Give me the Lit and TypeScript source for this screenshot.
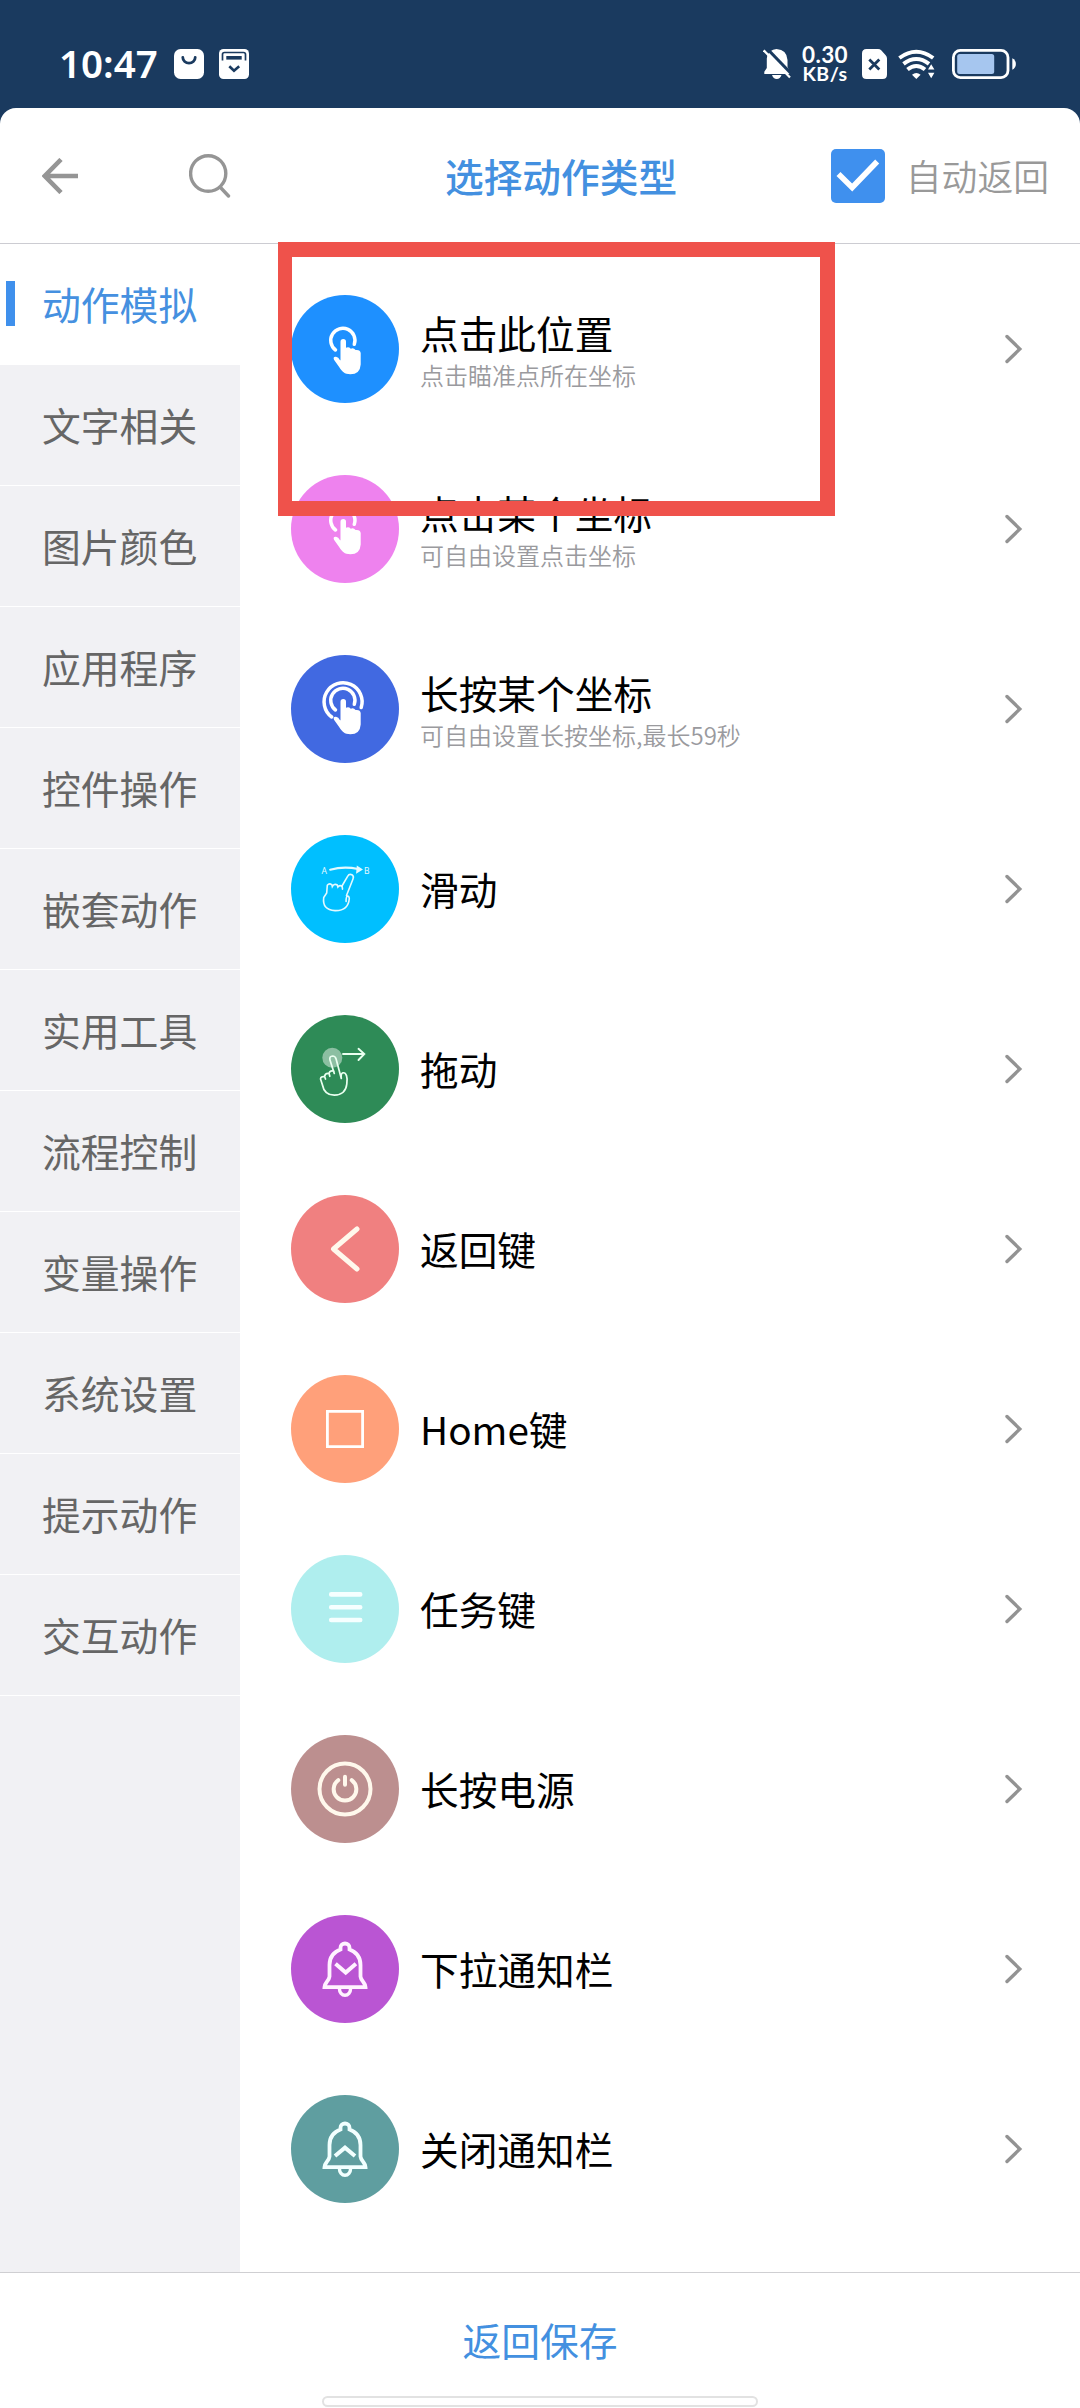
import { LitElement, html, svg, css, type SVGTemplateResult } from "lit";
import { customElement, property } from "lit/decorators.js";
import { classMap } from "lit/directives/class-map.js";

const hand = svg`<path fill="#fff" stroke="none" d="M49.500 65.200V46.700a2.750 2.750 0 0 1 5.500 0V52.800q2.600-1.400 4.800.9 2.800-1.200 4.800 1.300 4.600-.6 5.100 3V69.500q-.6 9.800-10.400 9.800c-5.800 0-8.400-2.800-11-7l-5.300-7.500q-1.300-3.300 2-3 2.500.5 4 3.400z"/>`;
const innerArc = svg`<path d="M44.500 55A12.100 12.100 0 1 1 63.300 49.300"/>`;
const bell = svg`<path stroke-width="3.800" d="M49.500 34.500v-1.800a4.500 4.200 0 0 1 9 0v1.800q11 4 11 15.500v11.500q.3 2.800 2.800 5.500 2 2.500 2.200 5.200h-41q.2-2.700 2.200-5.200 2.500-2.700 2.800-5.500V50q0-11.500 11-15.500z"/><path stroke-width="3.400" d="M48.400 73.500a5.600 6.800 0 0 0 11.200 0"/>`;

const ICONS: Record<string, SVGTemplateResult> = {
  tap: svg`<g stroke-width="3.500">${innerArc}</g>${hand}`,
  press: svg`<g stroke-width="3.500">${innerArc}<path d="M40.700 62A19 19 0 1 1 70.200 52.500"/></g>${hand}`,
  slide: svg`<g stroke="#e3f9ff" stroke-width="1.600"><path stroke-width="2.200" d="M39.200 34.700Q53 30.800 67 34"/><path fill="#e8faff" d="M66.500 31.800l4 2.600-4.500 2.800z"/>
    <path d="M50.700 51.500L56.600 41.300q1.600-2.700 4.300-1.500 2.300 1.300 1.100 4.200L55.500 60.500M36.300 50.200q2-2.400 4.600-.4l.4 1.800q2-3.400 5-1.600l.6 2q2.200-2.600 4.300-.4l.3 2.600M36.300 50.200l-.6 7.800-3 4.500q-1.600 12.600 11.300 13.100 13.300.4 14.300-12.100-.4-2.900-1.900-2.400-1.500 1-1.300 5.400"/></g>
    <text class="ab" x="30.500" y="38.600">A</text><text class="ab" x="73" y="39.400">B</text>`,
  drag: svg`<circle cx="41.300" cy="42.700" r="10" fill="#fff" fill-opacity=".45" stroke="none"/>
    <g stroke="#eafff0" stroke-width="1.700"><path stroke-width="1.900" d="M52 39H73.300M67.500 33.800L73.300 39l-5.800 6"/>
    <path d="M43.300 58.500L38.900 44.800q-.6-3.600 2.700-3.800 2.700 0 3.500 3l5.200 19.500M43 56.300q-3.900-1.400-5 2l.8 3M37.800 58.500q-3.800-.4-4.200 3l.9 2.500M33.500 61.700q-3.800-.7-4 2.300l1.800 5.500q2 10.700 12 10.700 11.400-.4 12.500-11.200.8-5.400-.3-8.400-1.200-3.300-3.600-2.800-2.300.7-1.600 5.600"/></g>`,
  back: svg`<path stroke="#fff8ec" stroke-width="5" stroke-linejoin="round" d="M66 34L42.500 54l23.500 20"/>`,
  home: svg`<path stroke-width="2.800" stroke-linejoin="miter" d="M36.400 36.400h35.200v35.200H36.400z"/>`,
  tasks: svg`<path stroke="#f6ffff" stroke-width="4.600" d="M40.200 39.400h29M40.200 52.200h29M40.200 65h29"/>`,
  power: svg`<g stroke="#fff8ec"><circle cx="54" cy="54" r="25.500" stroke-width="4"/><path stroke-width="4" d="M47.300 45.200A11.300 11.300 0 1 0 60.700 45.200M54 41.800V49.800"/></g>`,
  belldown: svg`<g stroke="#fff3ff">${bell}<path stroke-linecap="butt" stroke-linejoin="miter" stroke-width="4" d="M44.500 48.800L54.700 57.500 64.900 48.800"/></g>`,
  bellup: svg`<g stroke="#f2ffff">${bell}<path stroke-linecap="butt" stroke-linejoin="miter" stroke-width="4" d="M44 61L54 52.600 64 61"/></g>`,
};

interface Action {
  icon: string;
  color: string;
  title: string;
  note?: string;
}

const ACTIONS: Action[] = [
  { icon: "tap", color: "#1e90ff", title: "点击此位置", note: "点击瞄准点所在坐标" },
  { icon: "tap", color: "#ee82ee", title: "点击某个坐标", note: "可自由设置点击坐标" },
  { icon: "press", color: "#4169e1", title: "长按某个坐标", note: "可自由设置长按坐标,最长59秒" },
  { icon: "slide", color: "#00bfff", title: "滑动" },
  { icon: "drag", color: "#2e8b57", title: "拖动" },
  { icon: "back", color: "#f08080", title: "返回键" },
  { icon: "home", color: "#ffa07a", title: "Home键" },
  { icon: "tasks", color: "#afeeee", title: "任务键" },
  { icon: "power", color: "#bc8f8f", title: "长按电源" },
  { icon: "belldown", color: "#ba55d3", title: "下拉通知栏" },
  { icon: "bellup", color: "#5f9ea0", title: "关闭通知栏" },
];

const CATEGORIES = [
  "动作模拟", "文字相关", "图片颜色", "应用程序", "控件操作", "嵌套动作",
  "实用工具", "流程控制", "变量操作", "系统设置", "提示动作", "交互动作",
];

@customElement("status-bar")
export class StatusBar extends LitElement {
  static styles = css`
    :host { display: flex; height: 108px; box-sizing: border-box; padding: 20px 64px 0 59px; align-items: center; color: #fff; font-family: "Noto Sans", "Noto Sans CJK SC", sans-serif; }
    svg { display: block; flex: none; }
    .time { width: 115px; font-size: 38.500px; line-height: 60px; font-weight: 600; letter-spacing: 0; white-space: nowrap; padding-bottom: 2px; }
    .todo { margin-left: 15px; }
    .right { margin-left: auto; display: flex; align-items: center; }
    .speed { width: 48px; margin: 0 13px 0 10px; display: flex; flex-direction: column; align-items: center; font-family: Lato, "Noto Sans", sans-serif; font-weight: 700; white-space: nowrap; }
    .rate { font-size: 22.500px; line-height: 18px; letter-spacing: 0.4px; }
    .unit { font-size: 19.500px; line-height: 19px; letter-spacing: 0.5px; }
    .wifi { margin: 0 17px 0 11px; }
  `;

  render() {
    return html`
      <div class="time">10:47</div>
      <svg width="30" height="30" viewBox="0 0 30 30"><rect width="30" height="30" rx="6.500" fill="#fff"/><path d="M8.800 8.500a6.200 5.600 0 0 0 12.400 0" fill="none" stroke="#1a3a5f" stroke-width="2.800" stroke-linecap="round"/></svg>
      <svg class="todo" width="30" height="30" viewBox="0 0 30 30"><rect width="30" height="30" rx="4.500" fill="#fff"/><g fill="none" stroke="#1a3a5f"><path stroke-width="1.700" d="M3.500 11.500V5.500q0-2 2-2h19q2 0 2 2v6"/><rect x="7.300" y="7" width="15.400" height="3.600" fill="#1a3a5f" stroke="none"/><path stroke-width="2.600" d="M10.300 17.200l4.700 4.600 5.200-4.600"/></g></svg>
      <div class="right">
        <svg width="28" height="30" viewBox="0 0 28 30"><path fill="#fff" d="M7 2.500Q10 0 13.500 0 24 .7 24.500 11v7l3.500 7H1.300v-2.300L3.800 19V9.500Q4.200 5 7 2.500zM9 26h9.500q-1.300 4-4.750 4T9 26z"/><path stroke="#1a3a5f" stroke-width="3" d="M3-1.500L29 25.500"/><path stroke="#fff" stroke-width="2.200" d="M.7 1.300L27 28.500"/></svg>
        <div class="speed"><span class="rate">0.30</span><span class="unit">KB/s</span></div>
        <svg width="25" height="30" viewBox="0 0 25 30"><path fill="#fff" d="M4.500 0H16q2 0 3.200 1.300l4.500 5Q25 7.500 25 9.500V25.500q0 4.500-4.500 4.500h-16Q0 30 0 25.500v-21Q0 0 4.500 0z"/><path stroke="#1a3a5f" stroke-width="2.800" d="M7.300 10.600l10 10M17.300 10.600l-10 10"/></svg>
        <svg class="wifi" width="37" height="30" viewBox="0 0 37 30"><g fill="none" stroke="#fff" stroke-width="4"><path d="M1.400 9Q18.300-3.400 35.200 9"/><path d="M5.500 14.900Q18.300 5 31 14.900"/><path d="M9.500 20.500Q18.300 13.500 27 20.500"/></g><path fill="#fff" d="M14 25.700q4.300-3.600 8.600 0L18.300 30z"/><path fill="#fff" stroke="#1a3a5f" stroke-width="1.600" paint-order="stroke" d="M30 20.500l3.200-5.200 3.200 5.200zM30 23.800l3.200 5.400 3.200-5.400z"/></svg>
        <svg width="64" height="30" viewBox="0 0 64 30"><rect x="1.400" y="1.400" width="54.600" height="27.200" rx="7" fill="none" stroke="#fff" stroke-width="2.800"/><rect x="5.200" y="5" width="37" height="20" rx="2.500" fill="#a6c6ef"/><path fill="#fff" d="M60.300 9.200q3.600 2 3.600 5.800t-3.600 5.800z"/></svg>
      </div>
    `;
  }
}

@customElement("action-row")
export class ActionRow extends LitElement {
  @property({ attribute: false }) action!: Action;

  static styles = css`
    :host { display: flex; height: 180px; align-items: center; padding: 0 56px 0 51px; box-sizing: border-box; }
    .icon { display: block; flex: none; width: 108px; height: 108px; fill: none; stroke: #fff; stroke-linecap: round; }
    .ab { font: 8.500px "Noto Sans", sans-serif; fill: #e3f9ff; stroke: none; }
    .words { flex: 1; margin-left: 21px; display: flex; flex-direction: column; padding-bottom: 3px; white-space: nowrap; }
    .words.noted { padding-bottom: 0; }
    .title { font-size: 38.700px; line-height: 50px; color: #000; }
    .note { font-size: 24px; line-height: 34px; margin-top: 1px; color: #9a9a9e; font-weight: 350; }
    .go { display: block; flex: none; }
  `;

  render() {
    const a = this.action;
    return html`
      <svg class="icon" viewBox="0 0 108 108"><circle cx="54" cy="54" r="54" fill=${a.color} stroke="none"/>${ICONS[a.icon]}</svg>
      <div class=${classMap({ words: true, noted: !!a.note })}>
        <span class="title">${a.title}</span>
        ${a.note ? html`<span class="note">${a.note}</span>` : null}
      </div>
      <svg class="go" width="20" height="30" viewBox="0 0 20 30"><path d="M3 2.500L15.800 15 3 27.500" fill="none" stroke="#939393" stroke-width="3.400" stroke-linecap="round"/></svg>
    `;
  }
}

@customElement("app-root")
export class AppRoot extends LitElement {
  static styles = css`
    :host { display: block; width: 1080px; height: 2408px; overflow: hidden; background: #1a3a5f; font-family: "Noto Sans CJK SC", "Noto Sans", sans-serif; }
    .sheet { height: 2300px; box-sizing: border-box; background: #fff; border-radius: 16px 16px 0 0; display: flex; flex-direction: column; position: relative; }
    .head { height: 136px; box-sizing: border-box; border-bottom: 1px solid #ccccd2; display: grid; grid-template-columns: 445px 1fr auto; align-items: center; padding: 0 31px 0 0; flex: none; }
    .tools { display: flex; align-items: center; gap: 111px; padding-left: 42px; }
    .tools svg, .auto svg { display: block; }
    .heading { font-size: 38.700px; font-weight: 500; line-height: 50px; color: #4390e0; padding-bottom: 2px; }
    .auto { display: flex; align-items: center; gap: 21px; font-size: 35.800px; color: #999; line-height: 50px; font-weight: 350; }
    .auto span { padding-bottom: 1px; }
    .body { flex: 1; display: flex; min-height: 0; }
    .side { width: 240px; background: #f1f1f4; flex: none; }
    .cat { height: 121px; box-sizing: border-box; border-bottom: 1px solid #fff; display: flex; align-items: center; padding: 0 0 2px 6px; font-size: 38.800px; color: #666; white-space: nowrap; }
    .cat::before { content: ""; width: 9px; height: 45px; margin: 0 27px 0 0; }
    .cat.on { background: #fff; color: #4590e0; }
    .cat.on::before { background: #3f90ec; }
    .list { flex: 1; padding-top: 15px; overflow: hidden; }
    .foot { height: 136px; box-sizing: border-box; border-top: 1px solid #cfcfd2; display: flex; flex-direction: column; align-items: center; justify-content: space-between; padding: 41px 0 1px; flex: none; }
    .save { font-size: 38.800px; line-height: 50px; color: #4390e0; }
    .bar { width: 436px; height: 11px; box-sizing: border-box; border: 2px solid #e2e2e2; border-radius: 6px; background: #fff; }
    .mark { position: absolute; left: 278px; top: 134px; width: 557px; height: 274px; box-sizing: border-box; border: 15px solid #ef524b; border-left-width: 14px; }
  `;

  render() {
    return html`
      <status-bar></status-bar>
      <div class="sheet">
        <div class="head">
          <div class="tools">
            <svg width="36" height="36" viewBox="0 0 36 36"><path d="M19 1.500L2.800 18 19 34.500M2.800 18H36" fill="none" stroke="#959595" stroke-width="4.600"/></svg>
            <svg width="42" height="44" viewBox="0 0 42 44"><g fill="none" stroke="#959595" stroke-width="3.400" stroke-linecap="round"><ellipse cx="19.200" cy="19.500" rx="17.600" ry="17.800"/><path d="M31.500 33.500L39.500 42"/></g></svg>
          </div>
          <div class="heading">选择动作类型</div>
          <div class="auto">
            <svg width="54" height="54" viewBox="0 0 54 54"><rect width="54" height="54" rx="5" fill="#3f90ee"/><path d="M7.500 25L21.200 38.500 46.200 12.500" fill="none" stroke="#fff" stroke-width="5.600"/></svg>
            <span>自动返回</span>
          </div>
        </div>
        <div class="body">
          <div class="side">${CATEGORIES.map((c, i) => html`<div class=${classMap({ cat: true, on: i === 0 })}>${c}</div>`)}</div>
          <div class="list">${ACTIONS.map((a) => html`<action-row .action=${a}></action-row>`)}</div>
        </div>
        <div class="foot">
          <div class="save">返回保存</div>
          <div class="bar"></div>
        </div>
        <div class="mark"></div>
      </div>
    `;
  }
}
